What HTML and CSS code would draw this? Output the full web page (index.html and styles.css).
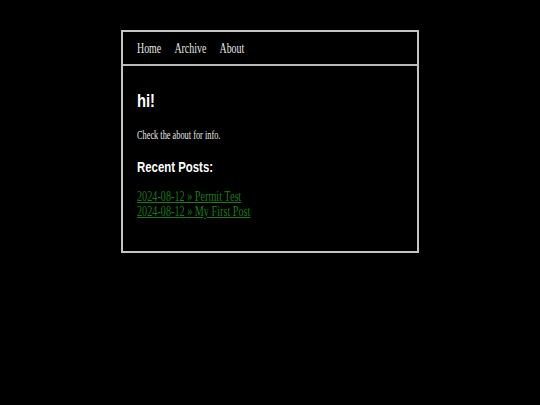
FILE: index.html
```html
<!DOCTYPE html>
<html lang="en">
<head>
<meta charset="utf-8">
<title>hi!</title>
<link rel="stylesheet" href="styles.css">
</head>
<body>
<div class="box">
  <nav class="nav">
    <div class="nav-links">
      <a href="#">Home</a>
      <a href="#">Archive</a>
      <a href="#">About</a>
    </div>
  </nav>
  <main class="main">
    <h1 class="title">hi!</h1>
    <p class="intro">Check the about for info.</p>
    <h2 class="subtitle">Recent Posts:</h2>
    <ul class="posts">
      <li><a href="#">2024-08-12 » Permit Test</a></li>
      <li><a href="#">2024-08-12 » My First Post</a></li>
    </ul>
  </main>
</div>
</body>
</html>
```
FILE: styles.css
```css
html, body {
  margin: 0;
  padding: 0;
  background: #000;
}
body {
  padding-top: 30px;
  font-family: "Liberation Serif", "Times New Roman", serif;
  color: #e6e6e6;
}
.box {
  width: 294px;
  margin: 0 auto;
  border: 2px solid #c4c4c4;
}
.nav {
  height: 32px;
  padding: 0 14px;
  border-bottom: 2px solid #b8b8b8;
}
.nav-links {
  display: flex;
  gap: 20px;
  font-size: 15px;
  line-height: 32px;
  transform: scaleX(0.66);
  transform-origin: left center;
}
.nav-links a {
  color: #e6e6e6;
  text-decoration: none;
}
.main {
  padding: 24px 14px 32px;
}
.title {
  margin: 0;
  font-family: "Liberation Sans", Arial, sans-serif;
  font-size: 18px;
  line-height: 22px;
  font-weight: bold;
  color: #fff;
  transform: scaleX(0.82);
  transform-origin: left center;
}
.intro {
  margin: 15px 0 0;
  font-size: 13px;
  line-height: 15px;
  transform: scaleX(0.64);
  transform-origin: left center;
}
.subtitle {
  margin: 16px 0 0;
  font-family: "Liberation Sans", Arial, sans-serif;
  font-size: 15px;
  line-height: 18px;
  font-weight: bold;
  color: #fff;
  transform: scaleX(0.76);
  transform-origin: left center;
}
.posts {
  list-style: none;
  margin: 13px 0 0;
  padding: 0;
  font-size: 15px;
  line-height: 15px;
  transform: scaleX(0.68);
  transform-origin: left center;
}
.posts a {
  color: #127f12;
  text-decoration: underline;
}
```
